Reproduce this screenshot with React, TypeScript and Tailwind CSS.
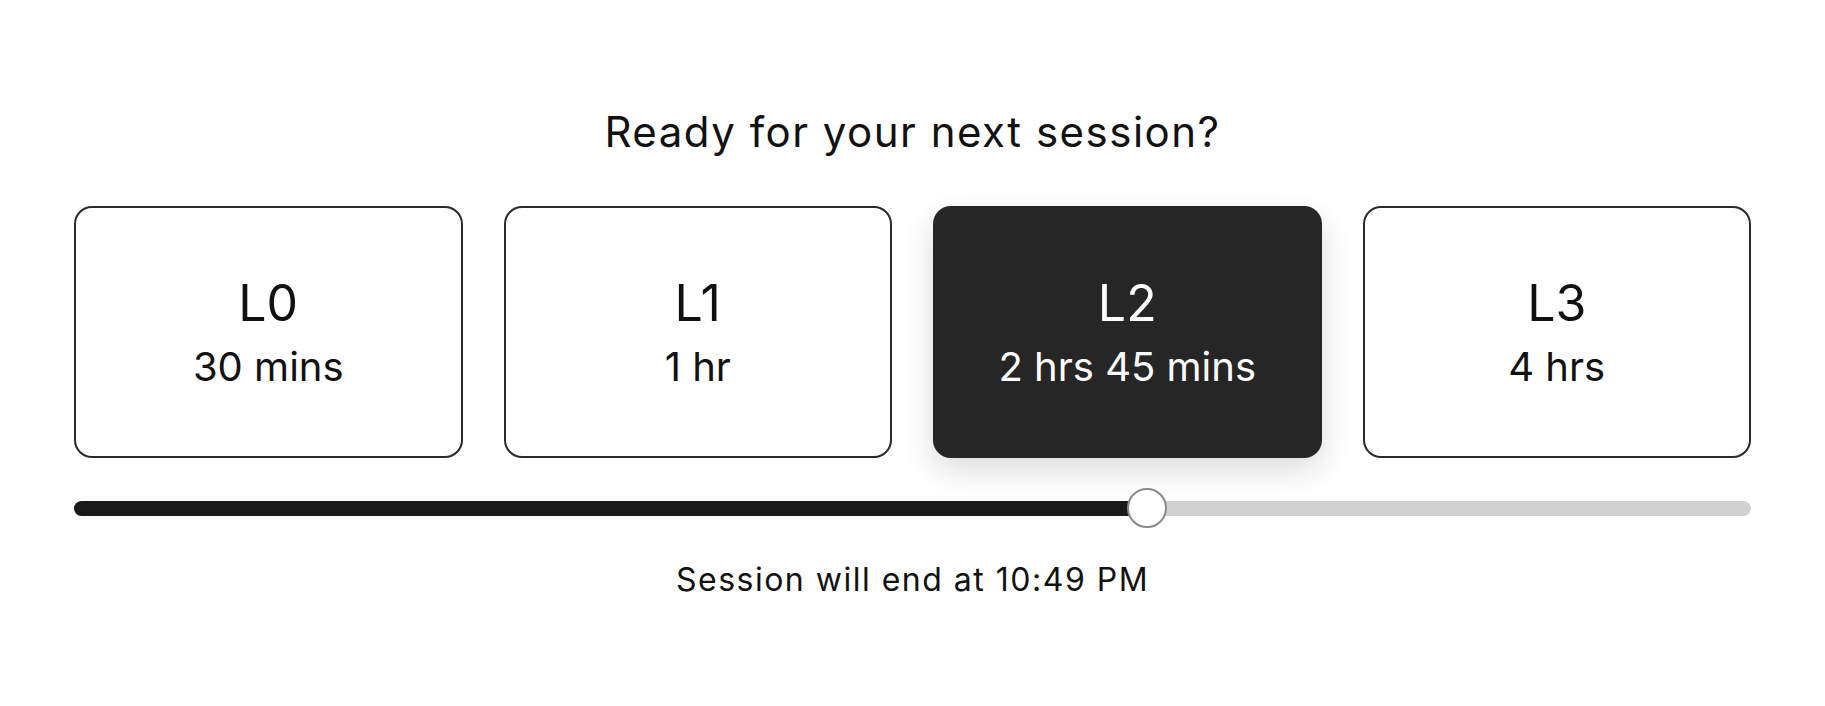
import { useState } from "react";

const levels = [
  { id: "L0", label: "30 mins", mins: 30 },
  { id: "L1", label: "1 hr", mins: 60 },
  { id: "L2", label: "2 hrs 45 mins", mins: 165 },
  { id: "L3", label: "4 hrs", mins: 240 },
];

export default function App() {
  const [selected, setSelected] = useState(2);
  const [value, setValue] = useState(64);

  return (
    <div className="min-h-screen bg-white font-['Inter','Noto_Sans',sans-serif] text-[#111]">
      <div className="px-[74px] pt-[107px]">
        <h1 className="text-center text-[42px] leading-[50px] font-normal tracking-[1.5px]">
          Ready for your next session?
        </h1>

        {/* Level cards */}
        <div className="mt-[49px] grid grid-cols-4 gap-[41px]">
          {levels.map((lvl, i) => {
            const active = i === selected;
            return (
              <button
                key={lvl.id}
                onClick={() => setSelected(i)}
                className={`flex h-[252px] flex-col items-center justify-center gap-[10px] rounded-[18px] ${
                  active
                    ? "bg-[#262626] text-white shadow-[0_12px_32px_rgba(0,0,0,0.14)]"
                    : "border-2 border-[#2a2a2a] bg-white text-[#111]"
                }`}
              >
                <span className="text-[50px] leading-[60px]">{lvl.id}</span>
                <span className="text-[40px] leading-[48px]">{lvl.label}</span>
              </button>
            );
          })}
        </div>

        {/* Slider */}
        <div className="mt-[30px] flex h-[40px] items-center">
          <div className="relative h-[15px] w-full rounded-full bg-[#d1d1d1]">
            <div
              className="h-full rounded-full bg-[#1a1a1a]"
              style={{ width: `${value}%` }}
            />
            <div
              className="absolute top-1/2 h-[40px] w-[40px] -translate-x-1/2 -translate-y-1/2 rounded-full border-[2.5px] border-[#8a8a8a] bg-white"
              style={{ left: `${value}%` }}
            />
            <input
              type="range"
              min={0}
              max={100}
              value={value}
              onChange={(e) => setValue(Number(e.target.value))}
              className="absolute inset-0 w-full cursor-pointer opacity-0"
            />
          </div>
        </div>

        <p className="mt-[33px] text-center text-[32px] leading-[38px] tracking-[1.5px]">
          Session will end at 10:49 PM
        </p>
      </div>
    </div>
  );
}
